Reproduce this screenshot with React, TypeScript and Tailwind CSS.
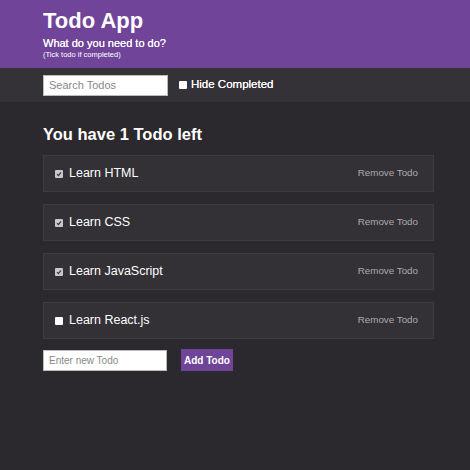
const todos = [
  { text: "Learn HTML", done: true },
  { text: "Learn CSS", done: true },
  { text: "Learn JavaScript", done: true },
  { text: "Learn React.js", done: false },
];

const Box = ({ checked }: { checked: boolean }) => (
  <span
    className={`flex h-[8px] w-[8px] shrink-0 items-center justify-center rounded-[1px] ${
      checked ? "bg-[#c8c8c8]" : "bg-white"
    }`}
  >
    {checked && (
      <svg width="6" height="6" viewBox="0 0 6 6">
        <path d="M1 3.2 L2.4 4.6 L5 1.4" stroke="#333" strokeWidth="1.1" fill="none" />
      </svg>
    )}
  </span>
);

export default function App() {
  return (
    <div className="flex min-h-[470px] flex-col bg-[#2c292e] font-['Liberation_Sans',Arial,sans-serif] text-white">
      <header className="h-[68px] bg-[#6f4499] px-[43px] pt-[8px]">
        <h1 className="text-[22px] font-bold leading-[26px]">Todo App</h1>
        <p className="mt-[3px] text-[11px] leading-[13px] [text-shadow:0_0_0.4px_white]">
          What do you need to do?
        </p>
        <p className="text-[7.5px] leading-[9px]">(Tick todo if completed)</p>
      </header>

      <div className="flex h-[34px] items-center gap-[11px] bg-[#343137] px-[43px]">
        <input
          placeholder="Search Todos"
          className="h-[21px] w-[125px] border border-[#bbb] bg-white px-[5px] text-[11px] text-black outline-none placeholder:text-[#888]"
        />
        <label className="flex items-center gap-[4px] text-[11.5px] [text-shadow:0_0_0.4px_white]">
          <Box checked={false} />
          Hide Completed
        </label>
      </div>

      <main className="px-[43px] pt-[22px]">
        <h2 className="text-[16.5px] font-bold leading-[20px]">You have 1 Todo left</h2>
        <ul className="mt-[11px] flex w-[391px] flex-col gap-[12px]">
          {todos.map((t) => (
            <li
              key={t.text}
              className="flex h-[37px] items-center justify-between border border-[#3e3b42] bg-[#333036] pl-[11px] pr-[15px]"
            >
              <div className="flex items-center gap-[6px] text-[12.5px]">
                <Box checked={t.done} />
                {t.text}
              </div>
              <span className="text-[9.8px] text-[#acaaae]">Remove Todo</span>
            </li>
          ))}
        </ul>
        <div className="mt-[10px] flex items-center gap-[14px]">
          <input
            placeholder="Enter new Todo"
            className="h-[21px] w-[124px] border border-[#bbb] bg-white px-[5px] text-[10px] text-black outline-none placeholder:text-[#888]"
          />
          <button className="h-[22px] w-[52px] bg-[#6f4499] text-[10px] font-bold text-white">
            Add Todo
          </button>
        </div>
      </main>
    </div>
  );
}
